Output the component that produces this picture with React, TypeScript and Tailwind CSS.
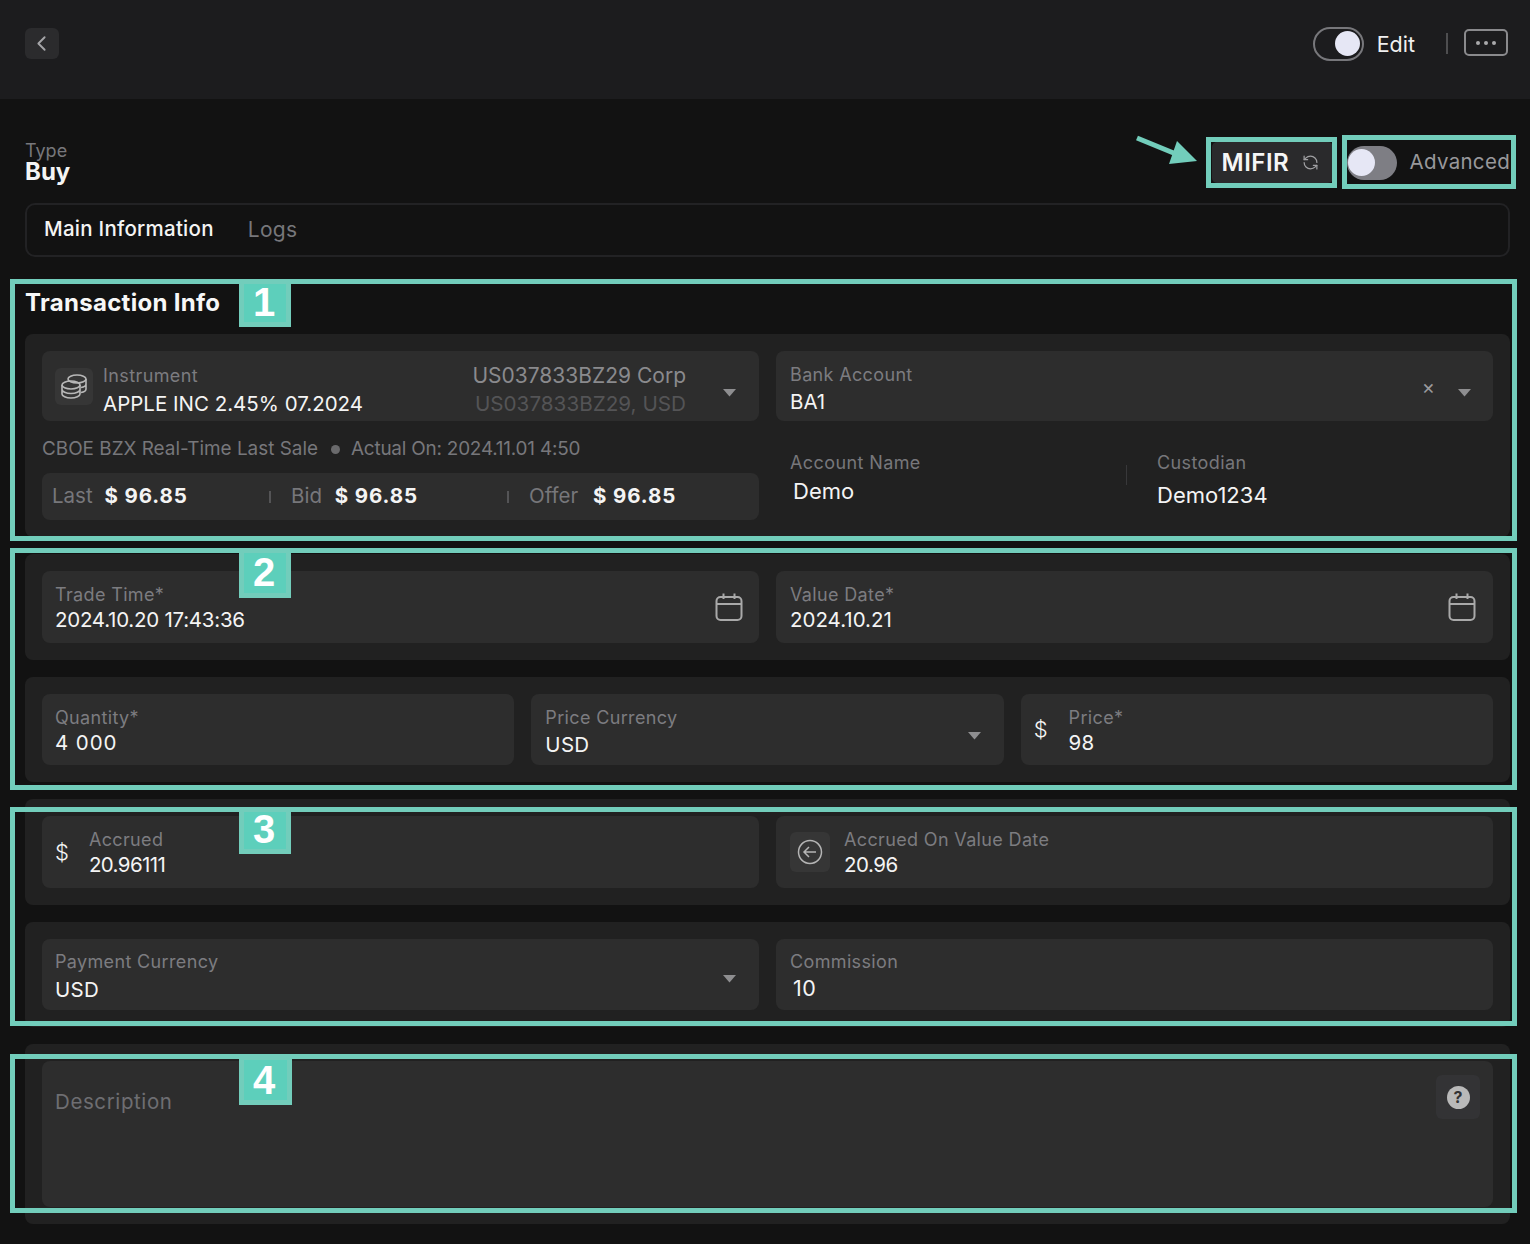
import React from "react";
import { ChevronLeft, RefreshCcw } from "lucide-react";

const Caret = ({ className = "" }: { className?: string }) => (
  <svg width="13" height="8" viewBox="0 0 13 8" className={`shrink-0 ${className}`}><path d="M0 0H13L6.5 7.5Z" fill="#8e8e90" /></svg>
);

const CalendarIcon = () => (
  <svg width="28" height="30" viewBox="0 0 28 30" fill="none" stroke="#a9a9a9" strokeWidth="2" className="shrink-0">
    <rect x="1.500" y="5" width="25" height="23" rx="4" />
    <path d="M1.500 12H26.500M8.500 1.500V7M19.500 1.500V7" />
  </svg>
);

const Coins = () => (
  <svg width="28" height="26" viewBox="0 0 28 26" fill="none" stroke="#b8b8b8" strokeWidth="1.600">
    <ellipse cx="17" cy="6" rx="9" ry="4" />
    <path d="M26 6V16C26 17.500 24 19 21 19.500M26 11C26 12.500 24 14 21 14.500" />
    <ellipse cx="11" cy="12" rx="9" ry="4" />
    <path d="M2 12V21C2 23 6 25 11 25C16 25 20 23 20 21V12M2 16.500C2 18.500 6 20.500 11 20.500C16 20.500 20 18.500 20 16.500" />
  </svg>
);

type FieldProps = {
  label: string;
  value: string;
  className?: string;
  valueClass?: string;
  labelClass?: string;
  right?: React.ReactNode;
  left?: React.ReactNode;
};

function Field({ label, value, className = "", valueClass = "", labelClass = "", right, left }: FieldProps) {
  return (
    <div className={`flex items-center rounded-[8px] bg-[#2d2d2d] ${className}`}>
      {left}
      <div className="min-w-0 flex-1 pt-[3px]">
        <div className={`text-[18px] leading-[25px] tracking-[0.35px] text-[#7c7c80] ${labelClass}`}>{label}</div>
        <div className={`text-[20.500px] leading-[28px] text-[#f4f4f4] ${valueClass}`}>{value}</div>
      </div>
      {right}
    </div>
  );
}

const Mark = ({ top, height, n, w = 52, className = "pb-[3px] pr-[2px]" }: { top: number; height: number; n: string; w?: number; className?: string }) => (
  <div
    className={`absolute left-[239px] flex items-center justify-center border-[5px] border-[#72cdbb] bg-[#5dcfbb] font-[Liberation_Sans,sans-serif] text-[40px] font-bold leading-none text-white ${className}`}
    style={{ top, height, width: w }}
  >
    {n}
  </div>
);

const Frame = ({ top, height }: { top: number; height: number }) => (
  <div className="pointer-events-none absolute left-[10px] w-[1507px] border-[5px] border-[#72cdbb]" style={{ top, height }} />
);

export default function App() {
  return (
    <div className="relative h-[1244px] w-[1530px] overflow-hidden bg-[#121212] font-[Inter,sans-serif] text-white">
      <header className="flex h-[99px] items-center justify-between bg-[#1c1c1e] pl-[25px] pr-[22px]">
        <button className="-mt-[12px] flex h-[31px] w-[34px] items-center justify-center rounded-[6px] bg-[#2b2b2d]">
          <ChevronLeft size={25} color="#a5a5a8" strokeWidth={1.800} className="-ml-[2px] -mt-[1px]" />
        </button>
        <div className="-mt-[12px] flex items-center">
          <div className="flex h-[34px] w-[51px] items-center justify-end rounded-full border-2 border-[#77777b] pr-[2px]">
            <div className="h-[25px] w-[25px] rounded-full bg-[#e6e7f5]" />
          </div>
          <span className="ml-[13px] translate-y-px text-[21.500px] text-[#f0f0f0]">Edit</span>
          <div className="ml-[31px] h-[21px] w-[2px] bg-[#4e4e50]" />
          <div className="ml-[16px] flex h-[27px] w-[44px] -translate-y-px items-center justify-center gap-[4px] rounded-[5px] border-2 border-[#8a8a8d]">
            <i className="h-[4px] w-[4px] rounded-full bg-[#a9a9ac]" />
            <i className="h-[4px] w-[4px] rounded-full bg-[#a9a9ac]" />
            <i className="h-[4px] w-[4px] rounded-full bg-[#a9a9ac]" />
          </div>
        </div>
      </header>

      <main className="pl-[25px] pr-[20px]">
        <div className="flex h-[104px] items-start justify-between">
          <div className="pt-[41px]">
            <div className="text-[18px] leading-[21px] text-[#77777b]">Type</div>
            <div className="text-[24px] font-bold leading-[22px] text-[#f4f4f4]">Buy</div>
          </div>
          <div className="flex items-center pt-[43px]">
            <div className="flex h-[41px] w-[121px] items-center gap-[13px] rounded-[5px] bg-[#2a2a2c] pl-[10px]">
              <span className="text-[24px] font-semibold tracking-[0.5px] text-[#f5f5f5]">MIFIR</span>
              <RefreshCcw size={17} color="#a0a0a3" strokeWidth={1.700} />
            </div>
            <div className="ml-[14px] flex h-[34px] w-[50px] items-center rounded-full bg-[#7e7e84] pl-[1px]">
              <div className="h-[27px] w-[27px] rounded-full bg-[#e6e7f5]" />
            </div>
            <span className="ml-[13px] text-[20.500px] tracking-[0.3px] text-[#98989b]">Advanced</span>
          </div>
        </div>

        <nav className="flex h-[54px] items-center gap-[34px] rounded-[10px] border-2 border-[#222224] pb-[1px] pl-[17px]">
          <span className="text-[20.500px] font-medium tracking-[0.25px] text-[#f4f4f4]">Main Information</span>
          <span className="text-[21px] tracking-[0.3px] text-[#77777b]">Logs</span>
        </nav>

        <h2 className="mt-[30px] h-[47px] text-[24px] font-bold leading-[32px] tracking-[0.300px] text-[#f7f7f7]">Transaction Info</h2>

        <div className="flex flex-col gap-[17px]">
          <section className="grid h-[203px] grid-cols-2 gap-x-[17px] rounded-[8px] bg-[#212121] p-[17px]">
            <div>
              <div className="flex h-[70px] items-center rounded-[8px] bg-[#2d2d2d] pl-[13px] pr-[23px]">
                <div className="flex h-[37px] w-[38px] shrink-0 items-center justify-center rounded-[6px] bg-[#363636]">
                  <Coins />
                </div>
                <div className="ml-[10px] flex-1 pt-[7px]">
                  <div className="text-[18px] leading-[29px] tracking-[0.4px] text-[#7c7c80]">Instrument</div>
                  <div className="text-[20.500px] leading-[28px] text-[#f4f4f4]">APPLE INC 2.45% 07.2024</div>
                </div>
                <div className="mr-[37px] pt-[7px] text-right">
                  <div className="text-[21px] leading-[29px] text-[#8a8a8d]">US037833BZ29 Corp</div>
                  <div className="text-[20.700px] leading-[28px] text-[#545456]">US037833BZ29, USD</div>
                </div>
                <Caret className="mt-[14px]" />
              </div>
              <div className="mt-[17px] flex h-[22px] items-center text-[18.900px] text-[#77777b]">
                CBOE BZX Real-Time Last Sale
                <i className="ml-[13px] mr-[11px] h-[9px] w-[9px] rounded-full bg-[#6a6a6c]" />
                <span className="tracking-[-0.2px]">Actual On: 2024.11.01 4:50</span>
              </div>
              <div className="mt-[13px] flex h-[47px] items-center rounded-[8px] bg-[#2d2d2d] pl-[10px]">
                <span className="w-[217px] text-[20.500px] text-[#77777b]">Last <b className="ml-[6px] font-bold tracking-[0.9px] text-[#f4f4f4]">$ 96.85</b></span>
                <i className="h-[12px] w-[2px] bg-[#545456]" />
                <span className="ml-[20px] w-[216px] text-[20.500px] text-[#77777b]">Bid <b className="ml-[7px] font-bold tracking-[0.9px] text-[#f4f4f4]">$ 96.85</b></span>
                <i className="h-[12px] w-[2px] bg-[#545456]" />
                <span className="ml-[20px] text-[20.500px] text-[#77777b]">Offer <b className="ml-[9px] font-bold tracking-[0.9px] text-[#f4f4f4]">$ 96.85</b></span>
              </div>
            </div>
            <div>
              <Field
                label="Bank Account"
                value="BA1"
                className="h-[70px] pl-[14px] pr-[22px]"
                labelClass="translate-y-[1px]"
                valueClass="translate-y-[2px]"
                right={
                  <div className="flex items-center gap-[23px]">
                    <span className="mt-[2px] text-[20px] leading-none text-[#9a9a9c]">×</span>
                    <Caret className="mt-[14px]" />
                  </div>
                }
              />
              <div className="mt-[30px] flex">
                <div className="w-[350px] pl-[14px]">
                  <div className="text-[18px] leading-[24px] tracking-[0.4px] text-[#77777b]">Account Name</div>
                  <div className="ml-[3px] mt-px text-[22px] leading-[30px] text-[#f4f4f4]">Demo</div>
                </div>
                <div className="mt-[14px] h-[20px] w-px bg-[#38383a]" />
                <div className="pl-[30px]">
                  <div className="text-[18px] leading-[24px] tracking-[0.4px] text-[#77777b]">Custodian</div>
                  <div className="mt-[5px] text-[22px] leading-[30px] text-[#f4f4f4]">Demo1234</div>
                </div>
              </div>
            </div>
          </section>

          <section className="grid h-[106px] grid-cols-2 gap-x-[17px] rounded-[8px] bg-[#212121] px-[17px] pt-[17px]">
            <Field label="Trade Time*" value="2024.10.20 17:43:36" valueClass="-translate-y-px tracking-[-0.25px]" className="h-[72px] pl-[13px] pr-[16px]" right={<CalendarIcon />} />
            <Field label="Value Date*" value="2024.10.21" valueClass="-translate-y-px" className="h-[72px] pl-[14px] pr-[17px]" right={<CalendarIcon />} />
          </section>

          <section className="grid h-[105px] grid-cols-3 gap-x-[17px] rounded-[8px] bg-[#212121] px-[17px] pt-[17px]">
            <Field label="Quantity*" value="4 000" valueClass="-translate-y-px tracking-[0.9px]" className="h-[71px] pl-[13px]" />
            <Field label="Price Currency" value="USD" valueClass="translate-y-px tracking-[0.3px]" className="h-[71px] pl-[14px] pr-[23px]" right={<Caret className="mt-[12px]" />} />
            <Field
              label="Price*"
              value="98"
              valueClass="-translate-y-px tracking-[0.3px]"
              className="h-[71px]"
              left={<span className="ml-[13px] mr-[21px] text-[22px] font-light text-[#f4f4f4]">$</span>}
            />
          </section>

          <section className="grid h-[106px] grid-cols-2 gap-x-[17px] rounded-[8px] bg-[#212121] px-[17px] pt-[17px]">
            <Field
              label="Accrued"
              value="20.96111"
              valueClass="-translate-y-px tracking-[-0.6px]"
              className="h-[72px]"
              left={<span className="ml-[13px] mr-[20px] text-[22px] font-light text-[#f4f4f4]">$</span>}
            />
            <Field
              label="Accrued On Value Date"
              value="20.96"
              valueClass="-translate-y-px tracking-[-0.5px]"
              labelClass="tracking-[0.4px]"
              className="h-[72px]"
              left={
                <div className="ml-[14px] mr-[14px] flex h-[40px] w-[40px] items-center justify-center rounded-[6px] bg-[#363636]">
                  <svg width="26" height="26" viewBox="0 0 26 26" fill="none" stroke="#b5b5b5" strokeWidth="1.500">
                    <circle cx="13" cy="13" r="11.500" />
                    <path d="M19 13H7M12 8L7 13L12 18" />
                  </svg>
                </div>
              }
            />
          </section>

          <section className="grid h-[105px] grid-cols-2 gap-x-[17px] rounded-[8px] bg-[#212121] px-[17px] pt-[17px]">
            <Field label="Payment Currency" value="USD" labelClass="-translate-y-px" valueClass="translate-y-px tracking-[0.3px]" className="h-[71px] pl-[13px] pr-[23px]" right={<Caret className="mt-[8px]" />} />
            <Field label="Commission" value="10" labelClass="-translate-y-px" valueClass="-translate-y-px ml-[3px] text-[21.500px] tracking-[0.5px]" className="h-[71px] pl-[14px]" />
          </section>

          <section className="h-[180px] rounded-[8px] bg-[#212121] px-[17px] pt-[17px]">
            <div className="flex h-[146px] items-start justify-between rounded-[8px] bg-[#2d2d2d] pl-[13px] pr-[13px]">
              <span className="mt-[26px] text-[20.500px] tracking-[0.6px] text-[#6e6e72]">Description</span>
              <div className="mt-[14px] flex h-[44px] w-[44px] items-center justify-center rounded-[6px] bg-[#333335]">
                <div className="flex h-[23px] w-[23px] items-center justify-center rounded-full bg-[#b9b9b9] text-[16px] font-bold leading-none text-[#333335]">?</div>
              </div>
            </div>
          </section>
        </div>
      </main>

      <Frame top={279} height={262} />
      <Frame top={548} height={242} />
      <Frame top={807} height={219} />
      <Frame top={1054} height={159} />
      <Mark top={279} height={48} n="1" />
      <Mark top={548} height={50} n="2" />
      <Mark top={807} height={47} n="3" />
      <Mark top={1055} height={50} n="4" w={53} className="pr-[3px]" />

      <div className="absolute left-[1206px] top-[137px] h-[51px] w-[131px] border-[5px] border-[#72cdbb]" />
      <div className="absolute left-[1342px] top-[135px] h-[54px] w-[174px] border-[5px] border-[#72cdbb]" />
      <svg className="absolute left-[1136px] top-[134px]" width="64" height="32" viewBox="0 0 64 32">
        <path d="M1 4L40 20" stroke="#72cdbb" strokeWidth="5" />
        <path d="M41 7L61 27L33 30Z" fill="#72cdbb" />
      </svg>
    </div>
  );
}
